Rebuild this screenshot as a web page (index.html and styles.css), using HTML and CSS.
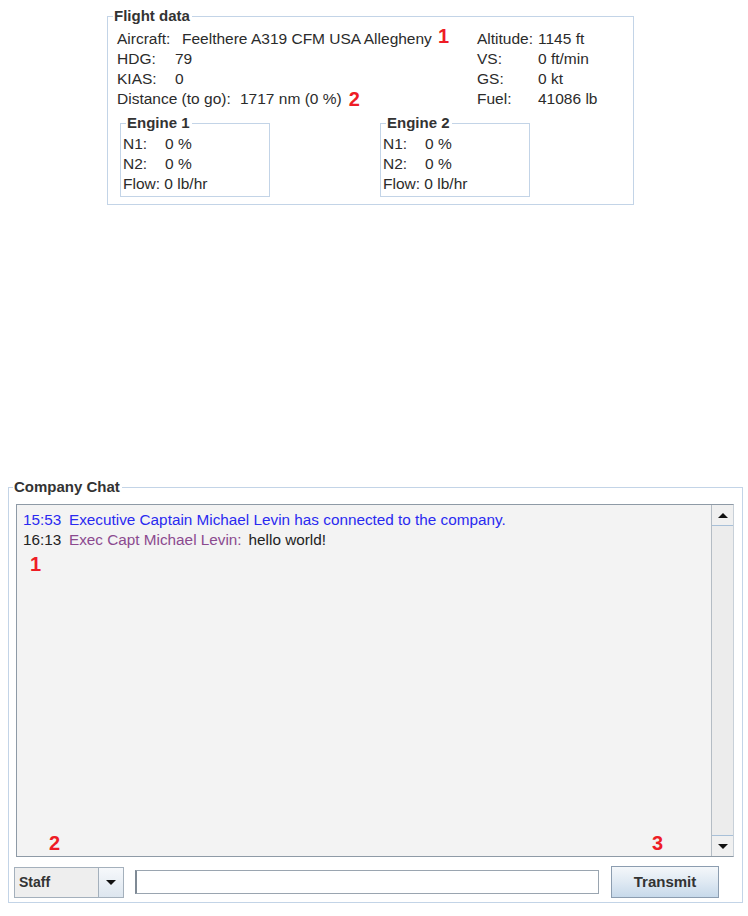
FILE: index.html
```html
<!DOCTYPE html>
<html>
<head>
<meta charset="utf-8">
<link rel="stylesheet" href="styles.css">
</head>
<body>
<div class="page">
  <fieldset class="box flight">
    <legend class="title">Flight data</legend>
    <div class="fd-top">
      <div class="fd-left">
        <div class="row"><span class="lbl w-air">Aircraft:</span><span>Feelthere A319 CFM USA Allegheny</span><span class="mark mark-1">1</span></div>
        <div class="row"><span class="lbl w-hdg">HDG:</span><span>79</span></div>
        <div class="row"><span class="lbl w-hdg">KIAS:</span><span>0</span></div>
        <div class="row"><span class="lbl w-dist">Distance (to go):</span><span>1717 nm (0 %)</span><span class="mark mark-2">2</span></div>
      </div>
      <div class="fd-right">
        <div class="row"><span class="lbl w-r">Altitude:</span><span>1145 ft</span></div>
        <div class="row"><span class="lbl w-r">VS:</span><span>0 ft/min</span></div>
        <div class="row"><span class="lbl w-r">GS:</span><span>0 kt</span></div>
        <div class="row"><span class="lbl w-r">Fuel:</span><span>41086 lb</span></div>
      </div>
    </div>
    <div class="engines">
      <fieldset class="box engine">
        <legend class="title">Engine 1</legend>
        <div class="row"><span class="lbl w-eng">N1:</span><span>0 %</span></div>
        <div class="row"><span class="lbl w-eng">N2:</span><span>0 %</span></div>
        <div class="row"><span class="lbl">Flow:&nbsp;</span><span>0 lb/hr</span></div>
      </fieldset>
      <fieldset class="box engine engine-2">
        <legend class="title">Engine 2</legend>
        <div class="row"><span class="lbl w-eng">N1:</span><span>0 %</span></div>
        <div class="row"><span class="lbl w-eng">N2:</span><span>0 %</span></div>
        <div class="row"><span class="lbl">Flow:&nbsp;</span><span>0 lb/hr</span></div>
      </fieldset>
    </div>
  </fieldset>

  <fieldset class="box chat">
    <legend class="title chat-title">Company Chat</legend>
    <div class="scrollpane">
      <div class="log">
        <div class="msg sys"><span class="time">15:53</span>Executive Captain Michael Levin has connected to the company.</div>
        <div class="msg"><span class="time">16:13</span><span class="who">Exec Capt Michael Levin:</span>hello world!</div>
        <span class="mark mark-c1">1</span>
        <span class="mark mark-c2">2</span>
        <span class="mark mark-c3">3</span>
      </div>
      <div class="vscroll">
        <div class="sbtn up"><span class="tri-up"></span></div>
        <div class="track"></div>
        <div class="sbtn down"><span class="tri-down"></span></div>
      </div>
    </div>
    <div class="controls">
      <div class="combo"><span class="combo-val">Staff</span><span class="combo-btn"><span class="tri-down"></span></span></div>
      <div class="textfield"></div>
      <div class="button">Transmit</div>
    </div>
  </fieldset>
</div>
</body>
</html>
```

FILE: styles.css
```css
html, body {
  margin: 0;
  padding: 0;
  background: #ffffff;
}
body {
  font-family: "Liberation Sans", Arial, sans-serif;
  font-size: 15.5px;
  color: #2b2b2b;
}
.page {
  width: 748px;
  height: 916px;
  position: relative;
  overflow: hidden;
}
.box {
  border: 1px solid #c3d4e7;
  margin: 0;
  min-width: 0;
}
.title {
  font-weight: bold;
  font-size: 15px;
  line-height: 18px;
  padding: 0 2px 0 1px;
  color: #333333;
}
.flight {
  margin: 7px 0 0 107px;
  width: 527px;
  height: 198px;
  box-sizing: border-box;
  padding: 4px 0 0 9px;
  position: relative;
}
.flight > .title {
  margin-left: -4px;
}
.row {
  display: flex;
  height: 20px;
  line-height: 20px;
  white-space: nowrap;
  position: relative;
}
.fd-top {
  display: flex;
}
.fd-left {
  width: 360px;
}
.lbl {
  display: inline-block;
}
.w-air { width: 65px; }
.w-hdg { width: 58px; }
.w-dist { width: 123px; }
.w-r { width: 61px; }
.w-eng { width: 42px; }
.mark {
  color: #ee1c25;
  font-weight: bold;
  font-size: 20px;
  font-family: "Liberation Sans", Arial, sans-serif;
  line-height: 20px;
}
.mark-1 { margin-left: 6px; margin-top: -3px; }
.mark-2 { margin-left: 7px; margin-top: 0px; }
.engines {
  display: flex;
  margin-top: 5px;
  margin-left: 3px;
}
.engine {
  width: 150px;
  height: 83px;
  box-sizing: border-box;
  padding: 2px 0 0 2px;
}
.engine > .title {
  margin-left: 3px;
}
.engine-2 {
  margin-left: 110px;
}
.chat {
  margin: 273px 0 0 8px;
  width: 735px;
  height: 425px;
  box-sizing: border-box;
  padding: 8px 0 0 7px;
  position: relative;
}
.chat-title {
  margin-left: -3px;
}
.scrollpane {
  display: flex;
  width: 718px;
  height: 353px;
  box-sizing: border-box;
  border: 1px solid #8e9aa6;
  border-right-color: #c8d0d8;
  background: #f3f3f3;
}
.log {
  flex: 1;
  padding: 5px 0 0 6px;
  position: relative;
  font-size: 15.3px;
}
.msg {
  height: 20px;
  line-height: 20px;
  white-space: nowrap;
  color: #222222;
}
.msg.sys {
  color: #2a2af0;
}
.time {
  display: inline-block;
  width: 46px;
}
.who {
  color: #8b4a8f;
  margin-right: 7px;
}
.mark-c1 {
  position: absolute;
  left: 13px;
  top: 49px;
  font-size: 20px;
}
.mark-c2 {
  position: absolute;
  left: 32px;
  top: 328px;
  font-size: 20px;
}
.mark-c3 {
  position: absolute;
  left: 635px;
  top: 328px;
  font-size: 20px;
}
.vscroll {
  width: 21px;
  display: flex;
  flex-direction: column;
  border-left: 1px solid #b4bcc4;
  background: #eaeaea;
}
.sbtn {
  height: 20px;
  display: flex;
  align-items: center;
  justify-content: center;
  background: #f0f0f0;
}
.sbtn.up {
  border-bottom: 1px solid #a8c0d8;
}
.sbtn.down {
  border-top: 1px solid #a8c0d8;
}
.track {
  flex: 1;
  background: #ececec;
}
.tri-up {
  width: 0;
  height: 0;
  border-left: 5px solid transparent;
  border-right: 5px solid transparent;
  border-bottom: 5px solid #111111;
}
.tri-down {
  width: 0;
  height: 0;
  border-left: 5px solid transparent;
  border-right: 5px solid transparent;
  border-top: 5px solid #111111;
}
.controls {
  display: flex;
  align-items: center;
  margin-top: 9px;
  margin-left: -2px;
  height: 32px;
}
.combo {
  display: flex;
  width: 110px;
  height: 31px;
  box-sizing: border-box;
  border: 1px solid #a4b0bc;
  background: #eeeeee;
}
.combo-val {
  flex: 1;
  font-weight: bold;
  font-size: 14px;
  line-height: 29px;
  padding-left: 4px;
  color: #333333;
  border-right: 1px solid #a4b0bc;
}
.combo-btn {
  width: 24px;
  display: flex;
  align-items: center;
  justify-content: center;
  background: linear-gradient(#f6f8fb, #dde6ef);
}
.textfield {
  width: 464px;
  height: 24px;
  box-sizing: border-box;
  margin-left: 11px;
  border: 1px solid #9aa5b0;
  border-left: 2px solid #7f8a95;
  background: #ffffff;
}
.button {
  width: 108px;
  height: 32px;
  box-sizing: border-box;
  margin-left: 12px;
  border: 1px solid #8c9db0;
  background: linear-gradient(#f4f7fa, #dfe9f3 50%, #c7d9ea);
  font-weight: bold;
  font-size: 15px;
  text-align: center;
  line-height: 30px;
  color: #333333;
}
```
